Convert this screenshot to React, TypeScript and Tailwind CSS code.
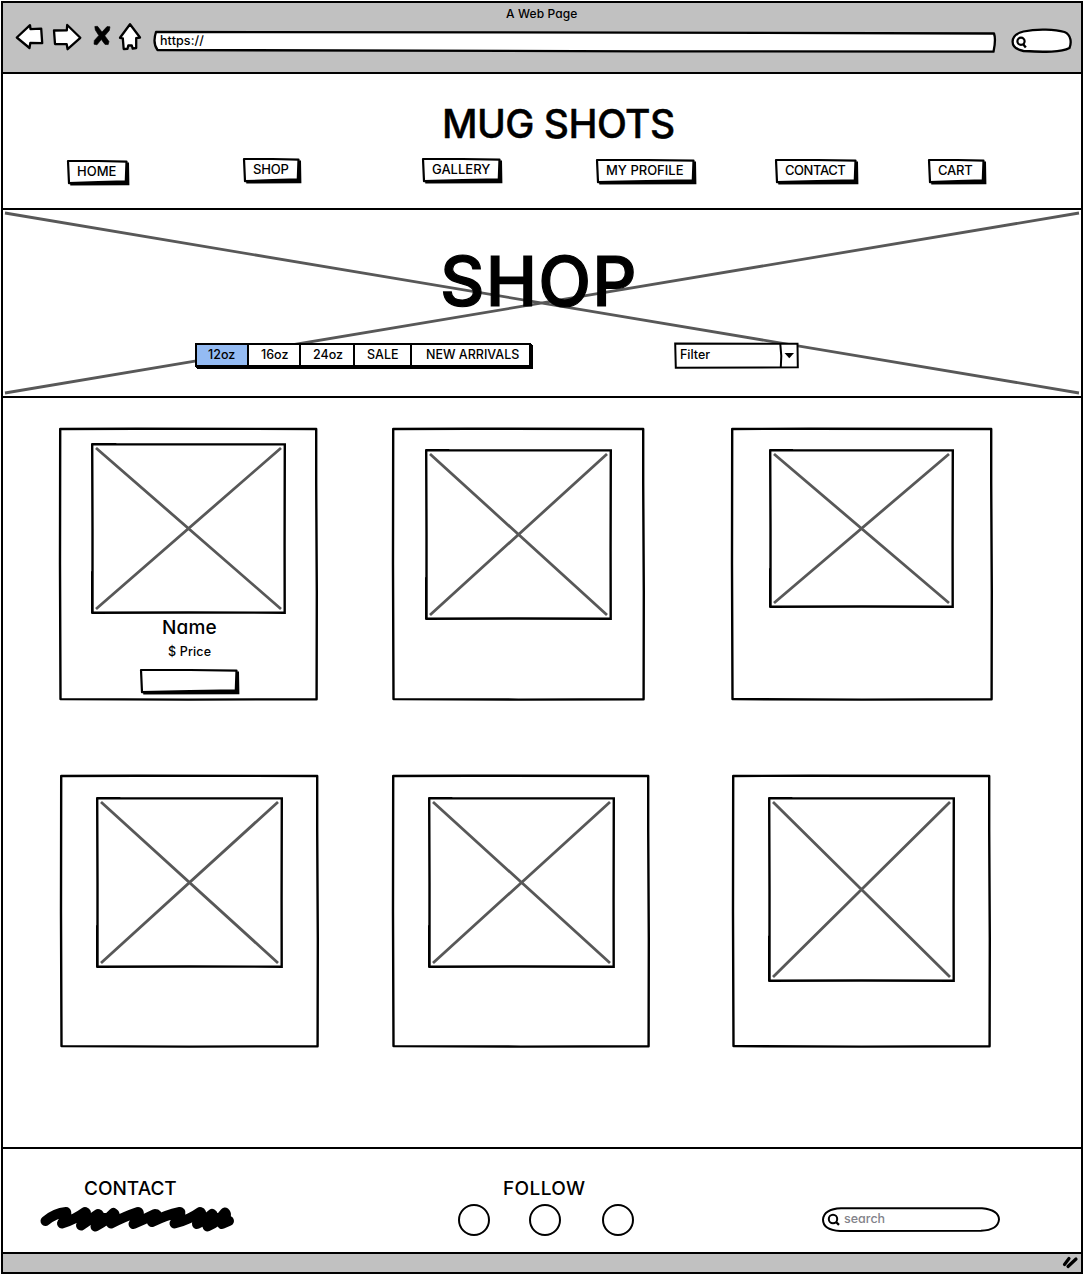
import type { ReactNode } from "react";

type Size = { w: number; h: number };

/* Slightly uneven hand-drawn outline that fills its parent box. */
function Outline({ w, h }: Size) {
  return (
    <svg className="absolute inset-0 overflow-visible" width={w} height={h} viewBox={`0 0 ${w} ${h}`} aria-hidden="true">
      <path d={`M3 ${h - 4}H${w - 5}V2.5H${w - 1}L${w - 0.6} ${h - 0.8}L3.3 ${h - 0.4}Z`} fill="#000" />
      <path
        d={`M1 1L${w / 2} 1L${w - 3.5} 1.6L${w - 4.2} ${h - 4.6}L${w / 2} ${h - 3.9}L2 ${h - 2.8}Z`}
        fill="#fff"
        stroke="#000"
        strokeWidth="2.2"
        strokeLinejoin="round"
      />
    </svg>
  );
}

function NavButton({ label, w, className }: { label: string; w: number; className: string }) {
  return (
    <a className={`relative block h-[26px] ${className}`}>
      <Outline w={w} h={26} />
      <span className="relative block pt-[3px] pl-[10px] text-[13px] leading-[17px] font-medium">{label}</span>
    </a>
  );
}

/* Crossed picture placeholder. */
function Picture({ w, h, className }: Size & { className: string }) {
  return (
    <div className={className}>
      <svg className="block overflow-visible" width={w} height={h} viewBox={`0 0 ${w} ${h}`} aria-hidden="true">
        <path d={`M5 5L${w - 5} ${h - 5}M${w - 5} 5L5 ${h - 5}`} stroke="#585858" strokeWidth="2.8" fill="none" />
        <path
          d={`M1.2 1.4L${w - 1.2} 1.4L${w - 1.4} ${h * 0.6}L${w - 1.3} ${h - 1.3}L${w / 2} ${h - 1.5}L1.5 ${h - 1.3}L1.5 ${h / 2}Z`}
          fill="none"
          stroke="#000"
          strokeWidth="2.4"
        />
        <path d={`M1 ${h * 0.75}V${h - 1}M1 0.9H${w * 0.13}`} stroke="#000" strokeWidth="2" />
      </svg>
    </div>
  );
}

function Card({ w, h, className, children }: Size & { className: string; children?: ReactNode }) {
  return (
    <article className={`relative ${className}`}>
      <svg className="absolute inset-0 overflow-visible" width={w} height={h} viewBox={`0 0 ${w} ${h}`} aria-hidden="true">
        <path
          d={`M1.2 1L${w * 0.3} 0.7L${w - 1.8} 1L${w - 1.8} ${h * 0.2}L${w - 1.2} ${h * 0.6}L${w - 1.4} ${h - 1.8}L${w * 0.5} ${h - 1.4}L1.5 ${h - 1.9}L1 ${h * 0.5}Z`}
          fill="none"
          stroke="#000"
          strokeWidth="2.4"
          strokeLinejoin="round"
        />
      </svg>
      <div className="relative">{children}</div>
    </article>
  );
}

function BrowserBar() {
  return (
    <div className="h-[71px] border-b-2 border-black bg-[#c1c1c1]">
      <div className="h-[20px] pt-[3px] pl-[503px] text-[12px] leading-[15px] font-medium tracking-[0.12px]">A Web Page</div>
      <div className="flex items-start pl-[12px]">
        <svg className="block h-[32px] w-[130px] shrink-0 overflow-visible" viewBox="15 23 130 32" aria-hidden="true">
          <g fill="#fff" stroke="#000" strokeWidth="2.3" strokeLinejoin="round">
            <path d="M16.8 37.5L30 25.2L30.5 29.2L41.2 28.6L42.2 43.2L30.3 43L29.5 48Z" />
            <path d="M54 30.5L66.8 30.3L67.2 25L80.3 37.8L67.6 49.2L66.7 44.2L55 44Z" />
            <path d="M130 24.2L140 37.5L136.2 38.2L136.2 48L132.7 48.6L131.8 45.5L128.3 45.5L127.5 48.8L123.7 49L122.8 38.4L120 37.8Z" />
          </g>
          <path d="M94.8 26.5L97.5 26.3L102 32L107 26.6L110 26.8L109.3 30.5L104.8 35.8L109 41.5L108.2 44.6L105 44.4L101.3 39.5L97 44.8L94 44.2L94.3 40.5L98.8 35.5L95.3 30Z" stroke="#000" strokeWidth="0.6" strokeLinejoin="round" />
        </svg>
        <div className="relative mt-[6px] ml-[8px] h-[24px] w-[845px]">
          <svg className="absolute inset-0" width="845" height="24" viewBox="153 28.5 845 24" aria-hidden="true">
            <path d="M156 31.5C420 31.2 720 32.3 994 33C996.2 39 994.5 46 993.5 51.2C720 51 420 50.6 157.5 49.5C153.5 44 154.5 36 156 31.5Z" fill="#fff" stroke="#000" strokeWidth="2.3" strokeLinejoin="round" />
          </svg>
          <span className="relative block pt-[4px] pl-[7px] text-[12.5px] leading-[16px] font-medium tracking-[0.1px]">https://</span>
        </div>
        <svg className="mt-[5px] ml-[12px] block shrink-0" width="62" height="27" viewBox="1009.5 28 62 27" aria-hidden="true">
          <path d="M1023 51C1008 48 1009 35 1023 31.5C1037 28.5 1055 29.5 1064 32C1071 35 1071 43 1069 48C1059 53.5 1037 51.5 1023 51Z" fill="#fff" stroke="#000" strokeWidth="2.3" />
          <circle cx="1020.5" cy="41.2" r="3.6" fill="none" stroke="#000" strokeWidth="2.2" />
          <path d="M1022.5 44L1025.3 47.5" stroke="#000" strokeWidth="2.4" />
        </svg>
      </div>
    </div>
  );
}

function Header() {
  return (
    <header className="h-[136px] border-b-2 border-black">
      <h1 className="h-[84px] pt-[24px] pl-[439px] text-[39px] leading-[52px] font-medium tracking-[-0.55px] whitespace-nowrap [-webkit-text-stroke:0.4px_#000]">MUG SHOTS</h1>
      <nav className="flex items-start whitespace-nowrap">
        <NavButton label="HOME" w={63} className="mt-[2px] ml-[64px] w-[63px]" />
        <NavButton label="SHOP" w={59} className="ml-[113px] w-[59px] tracking-[-0.2px]" />
        <NavButton label="GALLERY" w={81} className="ml-[120px] w-[81px]" />
        <NavButton label="MY PROFILE" w={101} className="mt-[1px] ml-[93px] w-[101px]" />
        <NavButton label="CONTACT" w={84} className="mt-[1px] ml-[78px] w-[84px] tracking-[-0.45px]" />
        <NavButton label="CART" w={59} className="mt-[1px] ml-[69px] w-[59px] tracking-[-0.2px]" />
      </nav>
    </header>
  );
}

const sizes = [
  { label: "12oz", cell: "w-[50px] bg-[#94bbf3] pl-[11px]" },
  { label: "16oz", cell: "w-[52px] border-l-2 bg-white pl-[12px]" },
  { label: "24oz", cell: "w-[54px] border-l-2 bg-white pl-[12px]" },
  { label: "SALE", cell: "w-[57px] border-l-2 bg-white pl-[12px]" },
  { label: "NEW ARRIVALS", cell: "w-[119px] border-l-2 bg-white pl-[14px]" },
];

function Hero() {
  return (
    <section className="relative h-[188px] border-b-2 border-black">
      <svg className="absolute inset-0" width="1078" height="186" viewBox="3 210 1078 186" aria-hidden="true">
        <path d="M5 213L1079 393M5 393L1079 213" stroke="#585858" strokeWidth="2.8" />
      </svg>
      <h2 className="relative h-[132px] pt-[27px] pl-[437px] text-[69px] leading-[88px] font-medium tracking-[1.1px] [-webkit-text-stroke:1.2px_#000]">SHOP</h2>
      <div className="relative flex">
        <div className="mt-px ml-[192px] flex h-[24px] w-[336px] border-2 border-black text-[12.5px] leading-[20px] font-medium whitespace-nowrap shadow-[1px_1px_0_#000,2px_2px_0_#000]">
          {sizes.map((s) => (
            <div key={s.label} className={`shrink-0 border-black ${s.cell}`}>{s.label}</div>
          ))}
        </div>
        <div className="relative ml-[143px] h-[27px] w-[125px] text-[12.5px] leading-[26px] font-medium">
          <svg className="absolute inset-0" width="125" height="27" viewBox="674 342 125 27" aria-hidden="true">
            <path d="M675.2 343.5L797.5 343.8L797.8 367.3L675.8 367.7Z" fill="#fff" stroke="#000" strokeWidth="2" />
            <path d="M780.3 344Q782 356 780.8 367" fill="none" stroke="#000" strokeWidth="2" />
            <path d="M784.5 353H794L789.3 358.2Z" />
          </svg>
          <span className="relative pl-[6px]">Filter</span>
        </div>
      </div>
    </section>
  );
}

function Products() {
  return (
    <main className="h-[751px] border-b-2 border-black pt-[30px] pl-[56px]">
      <div className="grid h-[347px] grid-cols-[333px_339px_262px] items-start">
        <Card w={259} h={273} className="h-[273px] w-[259px]">
          <Picture w={195} h={171} className="pt-[15px] pl-[32px]" />
          <p className="pt-[1px] pl-[103px] text-[19px] leading-[25px] font-medium tracking-[0.15px]">Name</p>
          <p className="pt-[4px] pl-[109px] text-[12.5px] leading-[16px] font-medium tracking-[0.15px]">$ Price</p>
          <button type="button" aria-label="Add to cart" className="relative mt-[9px] ml-[81px] block h-[26px] w-[100px]">
            <Outline w={100} h={26} />
          </button>
        </Card>
        <Card w={253} h={273} className="h-[273px] w-[253px]">
          <Picture w={187} h={171} className="pt-[21px] pl-[33px]" />
        </Card>
        <Card w={262} h={273} className="h-[273px] w-[262px]">
          <Picture w={185} h={159} className="pt-[21px] pl-[38px]" />
        </Card>
      </div>
      <div className="grid grid-cols-[333px_339px_262px] items-start">
        <Card w={259} h={273} className="ml-px h-[273px] w-[259px]">
          <Picture w={187} h={171} className="pt-[22px] pl-[36px]" />
        </Card>
        <Card w={258} h={273} className="h-[273px] w-[258px]">
          <Picture w={187} h={171} className="pt-[22px] pl-[36px]" />
        </Card>
        <Card w={259} h={273} className="ml-px h-[273px] w-[259px]">
          <Picture w={187} h={185} className="pt-[22px] pl-[36px]" />
        </Card>
      </div>
    </main>
  );
}

function Footer() {
  return (
    <footer className="flex h-[105px] items-start border-b-2 border-black">
      <div className="w-[452px]">
        <h3 className="pt-[28px] pl-[81px] text-[19px] leading-[24px] font-medium">CONTACT</h3>
        <svg className="mt-[5px] ml-[36px] block overflow-visible" width="197" height="28" viewBox="39 1206 197 28" aria-hidden="true">
          <path
            d="M45.5 1221Q55 1213 66 1212Q68 1214 62 1223.5Q74 1220 85 1212Q88 1213 81 1225.5Q91 1219 98 1214Q101 1215 95.5 1226.500Q107 1220 113.5 1213Q117 1215 111 1223.5Q126 1216 138 1212Q141 1213 133.5 1224Q145 1219 155 1214Q160 1214 152 1222Q166 1215 180 1212Q182 1213 174.5 1223.5Q189 1220 200 1212Q203 1213 197 1224Q206 1220 212 1214Q215 1216 207.5 1226.500Q218 1222 225 1212.500Q228 1215 222 1224L229 1221"
            fill="none"
            stroke="#000"
            strokeWidth="10"
            strokeLinecap="round"
            strokeLinejoin="round"
          />
          <path d="M80 1219H116M195 1219H227" stroke="#000" strokeWidth="12" />
        </svg>
      </div>
      <div className="w-[366px]">
        <h3 className="pt-[28px] pl-[48px] text-[19px] leading-[24px] font-medium tracking-[0.4px]">FOLLOW</h3>
        <div className="flex pt-[3px] pl-[3px]">
          <div className="size-8 rounded-full border-2 border-black" />
          <div className="ml-[39px] size-8 rounded-full border-2 border-black" />
          <div className="ml-[41px] size-8 rounded-full border-2 border-black" />
        </div>
      </div>
      <div className="relative mt-[57px] h-[26px] w-[180px]">
        <svg className="absolute inset-0" width="180" height="26" viewBox="821 1206 180 26" aria-hidden="true">
          <path d="M841 1208.3L982 1208.2Q999 1210 999 1219.5Q998 1230 981 1230.8L840 1231Q823 1230 823 1219.5Q824 1209 841 1208.3Z" fill="#fff" stroke="#000" strokeWidth="2" />
          <circle cx="833" cy="1219" r="4.2" fill="none" stroke="#000" strokeWidth="2" />
          <path d="M836 1222L839 1224.8" stroke="#000" strokeWidth="2.3" />
        </svg>
        <span className="relative block pt-[5px] pl-[23px] text-[12.5px] leading-[16px] font-medium text-[#82828a]">search</span>
      </div>
    </footer>
  );
}

export default function App() {
  return (
    <div className="h-[1275px] w-[1084px] bg-white pt-px pl-px font-['Inter',sans-serif] text-black [font-feature-settings:'cv11']">
      <div className="h-[1273px] w-[1082px] border-2 border-black">
        <BrowserBar />
        <Header />
        <Hero />
        <Products />
        <Footer />
        <div className="flex h-[18px] justify-end bg-[#c1c1c1]">
          <svg className="block overflow-visible" width="21" height="18" viewBox="1060 1254 21 18" aria-hidden="true">
            <path d="M1064.5 1264.5L1069 1258.5M1068 1266.5L1076 1259" stroke="#000" strokeWidth="3.2" strokeLinecap="round" />
          </svg>
        </div>
      </div>
    </div>
  );
}
